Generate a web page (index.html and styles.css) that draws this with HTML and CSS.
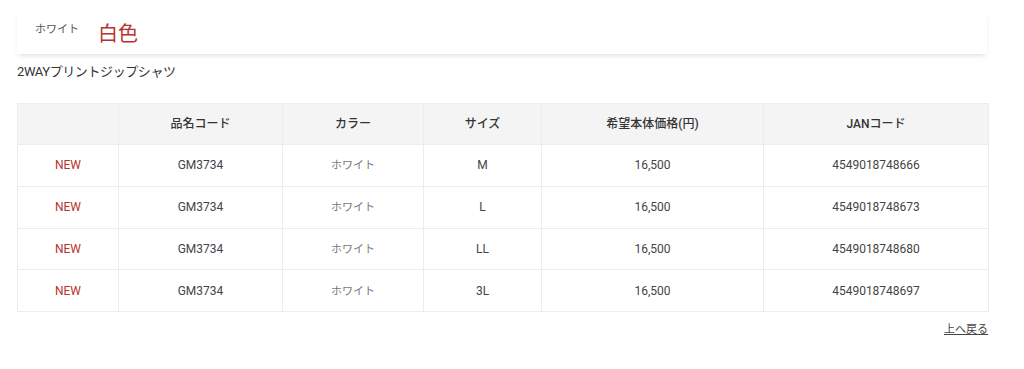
FILE: index.html
```html
<!DOCTYPE html>
<html lang="ja">
<head>
<meta charset="utf-8">
<link rel="stylesheet" href="styles.css">
</head>
<body>
<div class="page">
  <div class="colorbar">
    <span class="color-kana">ホワイト</span>
    <span class="color-kanji">白色</span>
  </div>
  <p class="product">2WAYプリントジップシャツ</p>
  <table class="spec">
    <colgroup>
      <col class="c1"><col class="c2"><col class="c3"><col class="c4"><col class="c5"><col class="c6">
    </colgroup>
    <thead>
      <tr><th></th><th>品名コード</th><th>カラー</th><th>サイズ</th><th>希望本体価格(円)</th><th>JANコード</th></tr>
    </thead>
    <tbody>
      <tr><td class="new">NEW</td><td>GM3734</td><td class="kana">ホワイト</td><td>M</td><td>16,500</td><td>4549018748666</td></tr>
      <tr><td class="new">NEW</td><td>GM3734</td><td class="kana">ホワイト</td><td>L</td><td>16,500</td><td>4549018748673</td></tr>
      <tr><td class="new">NEW</td><td>GM3734</td><td class="kana">ホワイト</td><td>LL</td><td>16,500</td><td>4549018748680</td></tr>
      <tr><td class="new">NEW</td><td>GM3734</td><td class="kana">ホワイト</td><td>3L</td><td>16,500</td><td>4549018748697</td></tr>
    </tbody>
  </table>
  <div class="back"><a href="#" class="back-link">上へ戻る</a></div>
</div>
</body>
</html>
```

FILE: styles.css
```css
html, body {
  margin: 0;
  padding: 0;
  background: #fff;
}
body {
  font-family: Roboto, "Noto Sans CJK JP", sans-serif;
  color: #333;
}
.page {
  width: 971px;
  padding: 10px 0 0 17px;
}
.colorbar {
  height: 44px;
  width: 970px;
  box-sizing: border-box;
  display: flex;
  align-items: center;
  padding: 0 0 0 18px;
  background: #fff;
  box-shadow: 0 3px 5px -2px rgba(0,0,0,0.16);
}
.color-kana {
  font-family: "Noto Sans CJK JP", sans-serif;
  font-size: 11px;
  color: #555;
  margin-top: -8px;
}
.color-kanji {
  font-family: "Noto Sans CJK JP", sans-serif;
  font-size: 20px;
  color: #b8322e;
  margin-left: 19px;
  margin-top: 1px;
}
.product {
  margin: 9px 0 0 0;
  font-size: 13px;
  line-height: 18px;
  color: #333;
  letter-spacing: -0.4px;
}
.spec {
  margin-top: 22px;
  width: 971px;
  border-collapse: collapse;
  table-layout: fixed;
  font-size: 12px;
  line-height: 16px;
}
.c1 { width: 101px; }
.c2 { width: 164px; }
.c3 { width: 141px; }
.c4 { width: 118px; }
.c5 { width: 222px; }
.c6 { width: 225px; }
.spec th, .spec td {
  border: 1px solid #ececec;
  text-align: center;
  padding: 0;
  color: #444;
}
.spec th {
  height: 40px;
  background: #f4f4f4;
  font-weight: 500;
  color: #333;
}
.spec td {
  height: 40.75px;
}
.spec td.new {
  color: #b8322e;
}
.spec td.kana {
  font-family: "Noto Sans CJK JP", sans-serif;
  color: #777;
  font-size: 11px;
  height: 38.75px;
  padding-bottom: 2px;
}
.back {
  display: flex;
  justify-content: flex-end;
  margin-top: 8px;
}
.back-link {
  font-family: "Noto Sans CJK JP", sans-serif;
  font-size: 11px;
  color: #444;
  text-decoration: underline;
}
```
